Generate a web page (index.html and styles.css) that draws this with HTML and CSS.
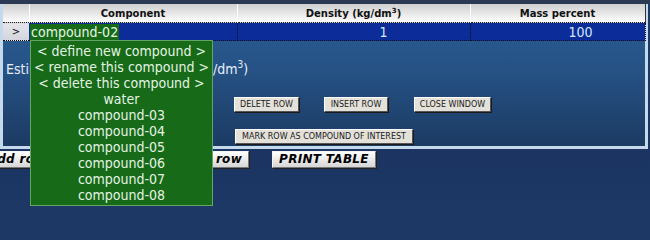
FILE: index.html
```html
<!DOCTYPE html>
<html>
<head>
<meta charset="utf-8">
<link rel="stylesheet" href="styles.css">
</head>
<body>
<div class="topstrip"></div>
<div class="panel">
  <table class="grid">
    <colgroup>
      <col class="w-sel"><col class="w-name"><col class="w-dens"><col class="w-mass">
    </colgroup>
    <thead>
      <tr>
        <th class="c-sel"></th>
        <th>Component</th>
        <th>Density (kg/dm<sup>3</sup>)</th>
        <th>Mass percent</th>
      </tr>
    </thead>
    <tbody>
      <tr class="row-active">
        <td class="c-sel">&gt;</td>
        <td class="c-name"><span class="name-cell">compound-02</span></td>
        <td class="num num-dens">1</td>
        <td class="num num-mass">100</td>
      </tr>
    </tbody>
  </table>
  <div class="estimate">Estimated density of mixture (kg/dm<sup>3</sup>)</div>
  <div class="tools">
    <button class="btn-sm b-del">DELETE ROW</button>
    <button class="btn-sm b-ins">INSERT ROW</button>
    <button class="btn-sm b-close">CLOSE WINDOW</button>
  </div>
  <div class="tools tools-2">
    <button class="btn-sm b-mark">MARK ROW AS COMPOUND OF INTEREST</button>
  </div>
</div>
<div class="actions">
  <button class="btn-lg b-add">Add row</button>
  <button class="btn-lg b-last">Delete last row</button>
  <button class="btn-lg">PRINT TABLE</button>
</div>
<ul class="dropdown">
  <li>&lt; define new compound &gt;</li>
  <li>&lt; rename this compound &gt;</li>
  <li>&lt; delete this compound &gt;</li>
  <li>water</li>
  <li>compound-03</li>
  <li>compound-04</li>
  <li>compound-05</li>
  <li>compound-06</li>
  <li>compound-07</li>
  <li>compound-08</li>
</ul>
</body>
</html>
```

FILE: styles.css
```css
html {
  margin: 0;
  padding: 0;
  background: #1d3864;
}
body {
  margin: 0;
  padding: 0;
  width: 650px;
  height: 206px;
  overflow: hidden;
  position: relative;
  background: linear-gradient(to bottom, #1d3a66 0px, #1b3462 150px, #1d3864 206px);
  font-family: "DejaVu Sans Condensed", "DejaVu Sans", sans-serif;
  font-stretch: condensed;
}
.topstrip {
  height: 4px;
  background: #2b3a52;
}
.panel {
  width: 642px;
  border: 3px solid #c5d9ec;
  border-top: 0;
  padding-bottom: 2px;
  background: linear-gradient(to bottom, #2c5f96 0px, #265387 60px, #1c3b63 142px);
}
.grid {
  border-collapse: collapse;
  table-layout: fixed;
  width: 642px;
}
.w-sel { width: 26px; }
.w-name { width: 208px; }
.w-dens { width: 233px; }
.w-mass { width: 175px; }
.grid th {
  height: 18px;
  padding: 0;
  font-family: "DejaVu Sans", sans-serif;
  font-stretch: normal;
  font-weight: bold;
  font-size: 10px;
  color: #111;
  text-align: center;
  background: linear-gradient(to bottom, #cfcfcf, #fcfcfc);
  border-right: 1px solid #ffffff;
  border-bottom: 1px dotted #222;
}
.grid th:last-child {
  border-right: 1px solid #333;
}
.grid th sup {
  font-size: 7px;
  line-height: 0;
}
.grid td {
  height: 17px;
  padding: 0;
  border-bottom: 1px dotted #111;
  border-right: 1px dotted #111;
  font-size: 14px;
  line-height: 16px;
  background: #0b2c99;
  color: #d4e8ff;
  white-space: nowrap;
}
.grid td.c-sel {
  background: linear-gradient(to bottom, #e4e4ea, #d4d4dc);
  color: #111;
  font-family: "DejaVu Sans", sans-serif;
  font-stretch: normal;
  font-size: 10px;
  text-align: center;
  border-right: 0;
}
.name-cell {
  display: inline-block;
  background: #176a17;
  color: #e6f6e6;
  padding: 0 1px;
  margin-left: 1px;
  height: 16px;
  vertical-align: top;
}
.num-dens { padding-left: 142px !important; }
.num-mass { padding-left: 98px !important; }
.estimate {
  margin-top: 20px;
  padding-left: 3px;
  font-size: 14px;
  line-height: 16px;
  color: #e8eef8;
  white-space: nowrap;
}
.estimate sup {
  font-size: 10px;
  line-height: 0;
}
.tools {
  display: flex;
  margin-top: 20px;
  margin-left: 231px;
}
.tools-2 {
  margin-top: 17px;
  margin-left: 232px;
}
.btn-sm {
  height: 15px;
  padding: 0;
  margin: 0;
  font-family: "DejaVu Sans", sans-serif;
  font-size: 8px;
  line-height: 12px;
  color: #1a1a1a;
  background: #e3e1d9;
  border: 1px solid;
  border-color: #ffffff #555 #555 #ffffff;
  box-shadow: 1px 1px 0 #1a1a1a;
  text-align: center;
}
.b-del { width: 65px; margin-right: 25px; }
.b-ins { width: 64px; margin-right: 26px; }
.b-close { width: 77px; }
.b-mark { width: 178px; }
.actions {
  display: flex;
  gap: 23px;
  margin-top: 2px;
  margin-left: -19px;
}
.btn-lg {
  height: 17px;
  padding: 0 6px;
  margin: 0;
  font-family: "DejaVu Sans", sans-serif;
  font-stretch: normal;
  font-weight: bold;
  font-style: italic;
  font-size: 12px;
  line-height: 15px;
  letter-spacing: 0.3px;
  color: #000;
  background: linear-gradient(to bottom, #ffffff, #d6d6d6);
  border: 1px solid;
  border-color: #f4f4f4 #777 #777 #f4f4f4;
  box-shadow: 1px 1px 0 #222;
  white-space: nowrap;
}
.b-last { padding-left: 58px; }
.dropdown {
  position: absolute;
  left: 30px;
  top: 40px;
  width: 181px;
  margin: 0;
  padding: 2px 0;
  list-style: none;
  background: #176a17;
  border: 1px solid #64a464;
  font-size: 14px;
  line-height: 16px;
  color: #e4f4e4;
  text-align: center;
}
```
